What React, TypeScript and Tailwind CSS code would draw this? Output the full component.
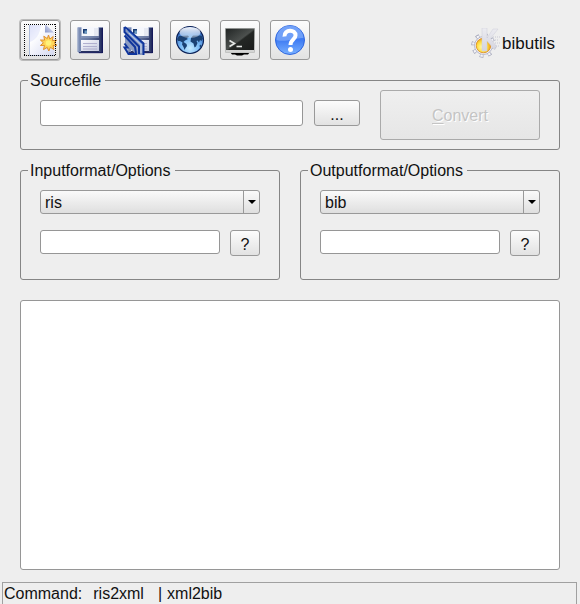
import React, { useState } from 'react';
import clsx from 'clsx';

const INPUT_FORMATS = ['ris', 'bib', 'copac', 'end', 'isi', 'med'];
const OUTPUT_FORMATS = ['bib', 'ris', 'end', 'ads', 'isi', 'wordbib'];

const NewIcon = () => (
  <svg viewBox="1 1 38 38" className="size-full" aria-hidden="true">
    <defs>
      <linearGradient id="page" x1="0" y1="0" x2="1" y2="1">
        <stop offset="0" stopColor="#c9d0f2" />
        <stop offset="0.3" stopColor="#ffffff" />
        <stop offset="0.65" stopColor="#e9ebf8" />
        <stop offset="1" stopColor="#d3d8ee" />
      </linearGradient>
      <linearGradient id="fold" x1="0" y1="1" x2="1" y2="0">
        <stop offset="0" stopColor="#8a97c8" />
        <stop offset="1" stopColor="#f2f4ff" />
      </linearGradient>
    </defs>
    <path d="M9 5H26L34 13V35.500H9Z" fill="url(#page)" />
    <path d="M9.500 5V35.500H34" fill="none" stroke="#aebbd8" />
    <path d="M10 5H21C20 14 16 20 10 22Z" fill="#e4e7fb" opacity="0.7" />
    <path d="M25 5V12.500H34L26 5Z" fill="url(#fold)" />
    <path
      d="M28.500 15l1.300 4 3.400-2.500-.8 4.200 4.200-.7-2.500 3 2.900 2.300-4 .2.900 4-3.500-2.200-1.600 3.700-1.600-3.600-3.700 2.200 1-4.200-4.100.1 3-2.700-3-2.800 4.200.1-.8-3.900 3.500 2.400Z"
      fill="#ffd65a"
      stroke="#e08f2c"
      strokeWidth="1"
      strokeLinejoin="round"
    />
    <circle cx="28.500" cy="23" r="2.800" fill="#fff27a" />
    <g fill="none" stroke="#000" strokeDasharray="1 1" shapeRendering="crispEdges">
      <path d="M4 4.500H36M4 35.500H36M4.500 4V36M35.500 4V36" />
    </g>
  </svg>
);

const Floppy = () => (
  <>
    <defs>
      <linearGradient id="disk" x1="0" y1="0" x2="1" y2="0">
        <stop offset="0" stopColor="#7f91b8" />
        <stop offset="0.45" stopColor="#66779f" />
        <stop offset="0.85" stopColor="#394675" />
        <stop offset="1" stopColor="#141a50" />
      </linearGradient>
      <linearGradient id="label" x1="0" y1="0" x2="1" y2="1">
        <stop offset="0" stopColor="#fbfbff" />
        <stop offset="1" stopColor="#c3c9de" />
      </linearGradient>
    </defs>
    <path d="M8 7H32L33 8V33H9L7.500 31.500V8Z" fill="url(#disk)" />
    <path d="M32.500 8V32.700H9" fill="none" stroke="#15195a" />
    <path d="M8 31V7.500H32" fill="none" stroke="#a7b4d0" strokeWidth="0.8" />
    <rect x="11.500" y="7" width="17" height="9" fill="#f5f7fc" />
    <rect x="24" y="8" width="4.500" height="8" fill="#e6e9f2" />
    <rect x="13" y="9" width="4" height="4.500" fill="#17396f" />
    <rect x="14.500" y="10.500" width="2.500" height="3" fill="#6f9bc4" />
    <path d="M11 17H29" stroke="#93a2c4" />
    <rect x="11" y="20" width="18" height="11" fill="url(#label)" />
    <path d="M13 23.500H27M13 26.500H27M13 29H27" stroke="#aaa9cb" strokeWidth="0.9" />
    <path d="M11 31.500H29" stroke="#27305f" />
  </>
);

const SaveIcon = () => (
  <svg viewBox="1 1 38 38" className="size-full" aria-hidden="true">
    <Floppy />
  </svg>
);

const SaveAsIcon = () => (
  <svg viewBox="1 1 38 38" className="size-full" aria-hidden="true">
    <Floppy />
    <path d="M5 8L23.500 24V35H17L5 24Z" fill="#8b9cc2" />
    <path d="M9 13L21 24.500V33" fill="none" stroke="#b9c6e0" strokeWidth="1.500" />
    <path
      d="M4.500 7L7 8.500 23.500 23.500V35M4.500 7V12L19 26.500V34M4.500 15.500L15 27 16 33M4.500 23.500L7.500 27.500H4.500L8.500 34H17"
      fill="none"
      stroke="#0f359c"
      strokeWidth="2"
    />
    <path d="M8 11L21.500 23.500" stroke="#3d79dd" strokeWidth="0.8" />
  </svg>
);

const GlobeIcon = () => (
  <svg viewBox="1 1 38 38" className="size-full" aria-hidden="true">
    <defs>
      <radialGradient id="sea" cx="0.5" cy="0.8" r="0.8">
        <stop offset="0" stopColor="#c4eaff" />
        <stop offset="0.45" stopColor="#76b8f5" />
        <stop offset="1" stopColor="#1c4fae" />
      </radialGradient>
      <linearGradient id="shine" x1="0" y1="0" x2="0" y2="1">
        <stop offset="0" stopColor="#ffffff" stopOpacity="0.95" />
        <stop offset="1" stopColor="#ffffff" stopOpacity="0.3" />
      </linearGradient>
    </defs>
    <circle cx="20" cy="20" r="13.500" fill="url(#sea)" stroke="#0c2257" strokeWidth="1.200" />
    <path
      d="M7 19L9 16 18 15.500 19 17 16.500 18 18 19 15 20.500 13.500 22 16.500 24 17 26 15.500 28 14.500 30 13.500 27 12 24.500 12.500 22.500 10 21 8 21Z"
      fill="#1b4173"
    />
    <path
      d="M21 18L23 15.500 31.500 15.500 33 18.500 31.500 21 30 20 29 22.500 27.500 20.500 26.500 21 27.500 23 26 26.500 24.500 27.500 23.500 23.500 20.500 21.500Z"
      fill="#1b4173"
    />
    <path d="M29.500 25.500l1.500-1 .5 1.500-1.500 2Z" fill="#1d4778" />
    <ellipse cx="20" cy="12.500" rx="10.500" ry="5.500" fill="url(#shine)" />
  </svg>
);

const TerminalIcon = () => (
  <svg viewBox="1 1 38 38" className="size-full" aria-hidden="true">
    <defs>
      <linearGradient id="screen" x1="0" y1="0" x2="1" y2="1">
        <stop offset="0" stopColor="#222625" />
        <stop offset="0.5" stopColor="#4c504e" />
        <stop offset="0.55" stopColor="#242725" />
        <stop offset="1" stopColor="#1a1c1b" />
      </linearGradient>
      <linearGradient id="bezel" x1="0" y1="0" x2="0" y2="1">
        <stop offset="0" stopColor="#8e918f" />
        <stop offset="1" stopColor="#c4c5c4" />
      </linearGradient>
    </defs>
    <path d="M10 32H30L28 34.500H24L22 35.500H17L15 34.500H12Z" fill="#000" />
    <rect x="5" y="8" width="30" height="25" rx="1" fill="url(#bezel)" />
    <rect x="6" y="9" width="28" height="21" fill="url(#screen)" />
    <path d="M6 31H34" stroke="#e8e8e8" />
    <path d="M9.500 20.500L14.500 23.500 9.500 26.500" fill="none" stroke="#e5e7e6" strokeWidth="1.600" />
    <path d="M16.500 26.500H22" stroke="#e5e7e6" strokeWidth="1.600" />
  </svg>
);

const HelpIcon = () => (
  <svg viewBox="1 1 38 38" className="size-full" aria-hidden="true">
    <defs>
      <linearGradient id="help" x1="0" y1="0" x2="0" y2="1">
        <stop offset="0" stopColor="#4d86f4" />
        <stop offset="0.5" stopColor="#3f7cf3" />
        <stop offset="1" stopColor="#78b0ff" />
      </linearGradient>
    </defs>
    <circle cx="20" cy="20" r="14.500" fill="url(#help)" stroke="#2f66df" />
    <path d="M6.500 20A13.500 13.500 0 0 1 33.500 18C27 17 15 23 6.500 20Z" fill="#8db5fb" opacity="0.6" />
    <path
      d="M14.500 16.500C14 9 26 9 25.500 15.500C25.500 19.500 20.500 19.500 20.500 25"
      fill="none"
      stroke="#fff"
      strokeWidth="4"
    />
    <circle cx="20.500" cy="29.500" r="2.500" fill="#fff" />
  </svg>
);

const GearLogo = () => (
  <svg viewBox="0 0 30 30" className="size-[30px]" aria-hidden="true">
    <defs>
      <radialGradient id="core" cx="0.4" cy="0.6" r="0.6">
        <stop offset="0" stopColor="#fffbb0" />
        <stop offset="0.6" stopColor="#ffdc3c" />
        <stop offset="1" stopColor="#ea9a1c" />
      </radialGradient>
      <linearGradient id="letter" x1="0" y1="0" x2="0" y2="1">
        <stop offset="0" stopColor="#ececf1" />
        <stop offset="1" stopColor="#d4d4df" />
      </linearGradient>
    </defs>
    <circle cx="12.500" cy="17.500" r="10.500" fill="none" stroke="#9fa2b6" strokeWidth="3.500" strokeDasharray="3.600 4.647" />
    <circle cx="12.500" cy="17.500" r="10" fill="none" stroke="#f4f4f8" strokeWidth="3" strokeDasharray="2.400 5.454" strokeDashoffset="-0.6" />
    <circle cx="12.500" cy="17.500" r="9" fill="#f1f1f7" stroke="#a9abc0" strokeWidth="0.800" />
    <circle cx="12.500" cy="17.500" r="7.300" fill="url(#core)" stroke="#d8861c" strokeWidth="0.800" />
    <path d="M11 0H16V10L22 1H27L19.500 10.500 26 19 22 20 16 13V23H11Z" fill="url(#letter)" stroke="#cdcdd8" strokeWidth="0.500" />
    <path d="M22 9H29M22 12H28M24 15H29M25 18H28" stroke="#c8c8d4" strokeDasharray="1 1" />
  </svg>
);

const TOOLS = [
  { label: 'New', icon: <NewIcon />, active: true },
  { label: 'Save', icon: <SaveIcon /> },
  { label: 'Save as', icon: <SaveAsIcon /> },
  { label: 'Website', icon: <GlobeIcon /> },
  { label: 'Terminal', icon: <TerminalIcon /> },
  { label: 'Help', icon: <HelpIcon /> }
];

const buttonClass = 'rounded-[3px] border border-[#999] bg-linear-to-b from-[#fcfcfc] to-[#e2e2e2]';
const inputClass = 'min-w-0 flex-1 rounded-[3px] border border-[#969696] bg-white px-1 outline-none';

interface GroupProps {
  title: string;
  className?: string;
  children: React.ReactNode;
}

const Group: React.FC<GroupProps> = ({ title, className, children }) => (
  <fieldset className={clsx('min-w-0 rounded-[3px] border border-[#858585] px-[19px]', className)}>
    <legend className="-ml-3 pl-0.5 pr-1 pt-0.5 leading-[18px]">{title}</legend>
    {children}
  </fieldset>
);

interface FormatGroupProps {
  title: string;
  formats: string[];
  value: string;
  onChange: (value: string) => void;
}

const FormatGroup: React.FC<FormatGroupProps> = ({ title, formats, value, onChange }) => (
  <Group title={title} className="flex-1 pb-[19px]">
    <div className="relative mt-2.5">
      <select
        aria-label={title}
        value={value}
        onChange={(e) => onChange(e.target.value)}
        className="block h-6 w-full appearance-none rounded-[3px] border border-[#999] bg-linear-to-b from-[#fafafa] to-[#dfdfdf] pl-1 outline-none"
      >
        {formats.map(format => (
          <option key={format} value={format}>{format}</option>
        ))}
      </select>
      <span className="pointer-events-none absolute inset-y-0 right-0 flex w-[17px] items-center justify-center border-l border-[#999]">
        <svg viewBox="0 0 8 4" className="h-1 w-2" aria-hidden="true">
          <path d="M0 0H8L4 4Z" fill="#000" />
        </svg>
      </span>
    </div>
    <div className="mt-4 flex h-[30px] items-start gap-2.5">
      <input type="text" aria-label={`${title} arguments`} className={clsx(inputClass, 'h-6')} />
      <button type="button" className={clsx(buttonClass, 'h-[26px] w-[30px] pt-0.5')}>?</button>
    </div>
  </Group>
);

export default function App() {
  const [source, setSource] = useState('');
  const [inputFormat, setInputFormat] = useState('ris');
  const [outputFormat, setOutputFormat] = useState('bib');
  const [output, setOutput] = useState('');

  return (
    <div className="flex min-h-screen flex-col bg-[#eee] font-['Liberation_Sans',Arial,sans-serif] text-base text-[#111]">
      <main className="flex flex-1 flex-col px-5 pt-5">
        <header className="flex items-start justify-between">
          <div className="flex gap-2.5">
            {TOOLS.map(tool => (
              <button
                key={tool.label}
                type="button"
                aria-label={tool.label}
                className={clsx(buttonClass, 'size-10', tool.active && 'ring-1 ring-[#bbb]')}
              >
                {tool.icon}
              </button>
            ))}
          </div>
          <div className="flex items-center gap-px pr-[5px] pt-2">
            <GearLogo />
            <span className="pt-0.5 text-[17px] leading-5">bibutils</span>
          </div>
        </header>

        <Group title="Sourcefile" className="mt-2.5 pb-[9px]">
          <div className="flex items-start">
            <div className="mr-5 flex flex-1 gap-[11px] pt-2.5">
              <input
                type="text"
                aria-label="Sourcefile"
                value={source}
                onChange={(e) => setSource(e.target.value)}
                className={clsx(inputClass, 'h-[26px]')}
              />
              <button type="button" className={clsx(buttonClass, 'h-[26px] w-[46px] pt-0.5')}>...</button>
            </div>
            <button
              type="button"
              disabled={!source.trim()}
              className="h-[50px] w-40 rounded-[3px] border border-[#aaa] bg-linear-to-b from-[#efefef] to-[#e6e6e6] pt-0.5 disabled:text-[#c4c4c4] disabled:text-shadow-[1px_1px_0_#fff]"
            >
              <span className="underline underline-offset-2">C</span>onvert
            </button>
          </div>
        </Group>

        <div className="mt-2.5 flex gap-5">
          <FormatGroup title="Inputformat/Options" formats={INPUT_FORMATS} value={inputFormat} onChange={setInputFormat} />
          <FormatGroup title="Outputformat/Options" formats={OUTPUT_FORMATS} value={outputFormat} onChange={setOutputFormat} />
        </div>

        <textarea
          aria-label="Output"
          value={output}
          onChange={(e) => setOutput(e.target.value)}
          className="mt-5 mb-3 min-h-40 w-full flex-1 resize-none rounded-[3px] border border-[#969696] bg-white p-1 outline-none"
        />
      </main>

      <footer className="ml-0.5 mr-[3px] flex h-[22px] items-center border border-b-0 border-[#a0a0a0] pl-px">
        <span className="mr-[11px]">Command:</span>
        <span className="mr-3.5">{inputFormat}2xml</span>
        <span className="mr-[5px]">|</span>
        <span>xml2{outputFormat}</span>
      </footer>
    </div>
  );
}
